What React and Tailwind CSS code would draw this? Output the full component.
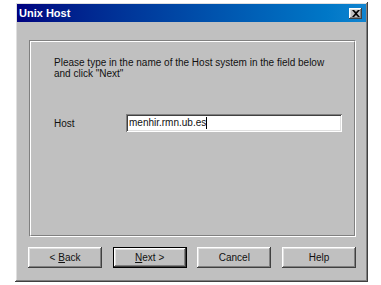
const raised =
  'shadow-[inset_-1px_-1px_0_#404040,inset_1px_1px_0_#ffffff,inset_-2px_-2px_0_#808080,inset_2px_2px_0_#dfdfdf]';

const WizButton = ({ children, isDefault = false }) => (
  <div className={`w-[74px] h-[21px] ${isDefault ? 'border border-black' : ''} bg-[#c0c0c0]`}>
    <div className={`w-full h-full flex items-center justify-center text-[10px] text-[#111] ${raised}`}>
      {children}
    </div>
  </div>
);

export default function App() {
  return (
    <div
      className="w-[381px] h-[285px] bg-white pl-[15px] pt-[2px]"
      style={{ fontFamily: '"Liberation Sans", Arial, sans-serif' }}
    >
      <div
        className={`w-[353px] h-[280px] bg-[#c0c0c0] p-[2px] flex flex-col ${raised}`}
      >
        {/* title bar */}
        <div className="h-[18px] flex items-center justify-between pl-[2px] pr-[4px] bg-gradient-to-r from-[#000080] to-[#1084d0]">
          <span className="text-white font-bold text-[11px] leading-none">Unix Host</span>
          <div className={`w-[13px] h-[11px] bg-[#c0c0c0] flex items-center justify-center ${raised}`}>
            <svg width="8" height="7" viewBox="0 0 8 7">
              <path d="M0 0h2l2 2 2-2h2L5 3.5 8 7H6L4 5 2 7H0l3-3.5z" fill="#000" />
            </svg>
          </div>
        </div>

        {/* group frame */}
        <div className="ml-[12px] mt-[18px] w-[327px] h-[197px] border border-t-[#808080] border-l-[#808080] border-r-white border-b-white">
          <div className="w-full h-full border border-t-white border-l-white border-r-[#808080] border-b-[#808080] pl-[23px] pt-[15px]">
            <p className="text-[10px] leading-[11px] text-[#111]">
              Please type in the name of the Host system in the field below
              <br />
              and click "Next"
            </p>
            <div className="flex items-center mt-[35px]">
              <span className="w-[72px] text-[10px] text-[#111]">Host</span>
              <div className="w-[216px] h-[18px] bg-white shadow-[inset_1px_1px_0_#808080,inset_-1px_-1px_0_#ffffff,inset_2px_2px_0_#404040,inset_-2px_-2px_0_#dfdfdf] flex items-center pl-[3px]">
                <span className="text-[10px] text-[#111] leading-none">menhir.rmn.ub.es</span>
                <span className="w-px h-[12px] bg-black" />
              </div>
            </div>
          </div>
        </div>

        {/* buttons */}
        <div className="ml-[11px] mt-[10px] w-[328px] flex justify-between">
          <WizButton>
            &lt; <span className="underline ml-[3px]">B</span>ack
          </WizButton>
          <WizButton isDefault>
            <span className="underline">N</span>ext &gt;
          </WizButton>
          <WizButton>Cancel</WizButton>
          <WizButton>Help</WizButton>
        </div>
      </div>
    </div>
  );
}
